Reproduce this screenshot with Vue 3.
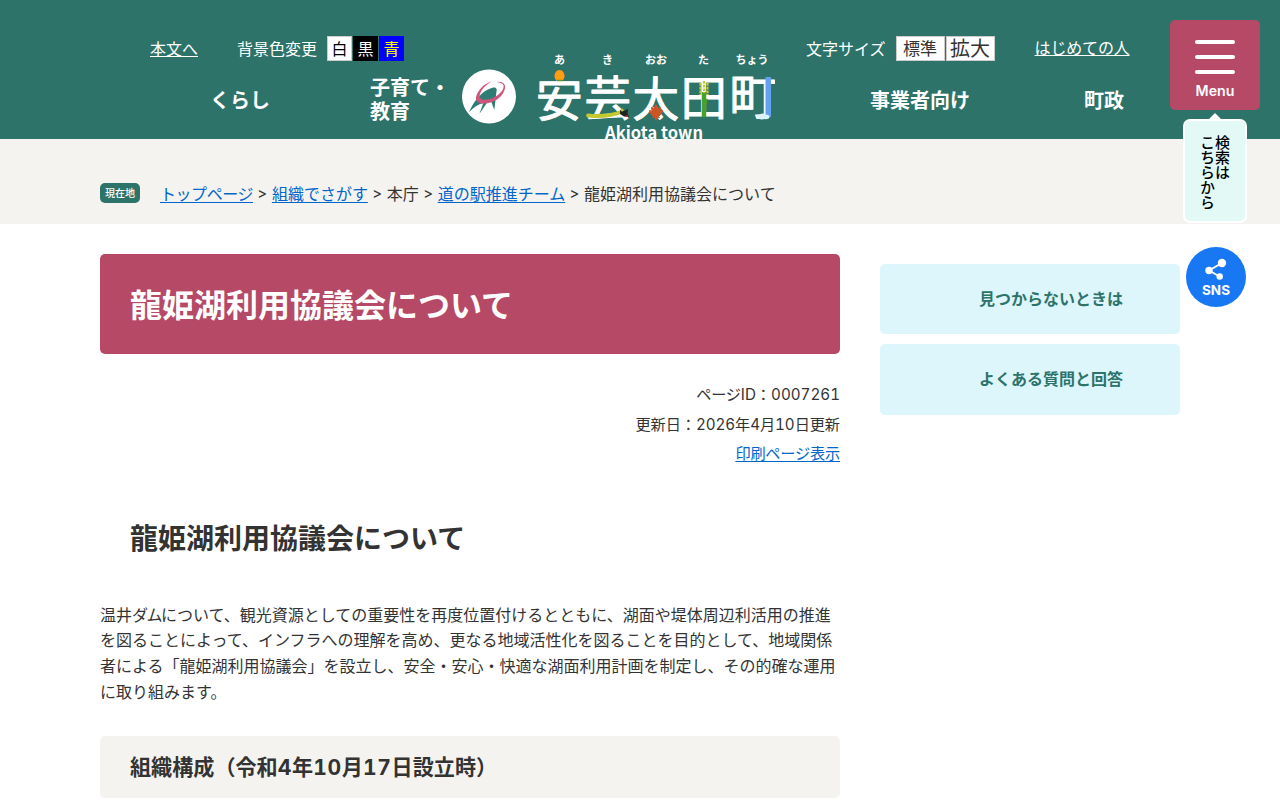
<script setup>
import { ref } from 'vue';

const bgColors = [
    { name: '白', key: 'white' },
    { name: '黒', key: 'black' },
    { name: '青', key: 'blue' },
];

const breadcrumbs = [
    { title: 'トップページ', link: true, kana: true },
    { title: '組織でさがす', link: true },
    { title: '本庁' },
    { title: '道の駅推進チーム', link: true },
    { title: '龍姫湖利用協議会について' },
];

const sideLinks = ['見つからないときは', 'よくある質問と回答'];

const ruby = [
    { text: 'あ', x: 119.5 },
    { text: 'き', x: 167.5 },
    { text: 'おお', x: 216 },
    { text: 'た', x: 263.5 },
    { text: 'ちょう', x: 312 },
];

const bgColor = ref('white');
</script>

<template>
    <div class="page">
        <header class="header">
            <div class="header__left">
                <div class="tools">
                    <a href="#main" class="tools__link">本文へ</a>
                    <span class="tools__label tools__label--bg">背景色変更</span>
                    <div class="colors">
                        <button v-for="c in bgColors" :key="c.key" @click="bgColor = c.key" class="colors__btn"
                            :class="`colors__btn--${c.key}`">{{ c.name }}</button>
                    </div>
                </div>
                <nav class="nav">
                    <a class="nav__item nav__item--life">くらし</a>
                    <a class="nav__item nav__item--child">子育て・<br>教育</a>
                </nav>
            </div>

            <svg class="logo" viewBox="22 10 313 100" width="313" height="100">
                <circle cx="49" cy="56.500" r="27" fill="#fff" />
                <g transform="translate(15 20) scale(.3333)">
                    <path d="M42 157C55 125 80 92 112 83c12-2 15 4 12 15l-6 52-10-27-10 2-25 37 12-33c-15 3-30 14-43 28z"
                        fill="#2e7c74" />
                    <path d="M98 122l2 38 8-37z" fill="#fff" />
                    <path d="M125 66C150 62 156 80 145 98C130 125 95 133 78 130C58 125 60 108 72 92C82 78 98 67 112 64C95 72 80 88 75 102C70 118 85 122 102 118C125 112 140 98 145 85C149 72 140 68 125 66z"
                        fill="#d0557a" />
                </g>

                <text v-for="r in ruby" :key="r.text" :x="r.x" y="23.500" class="logo__ruby">{{ r.text }}</text>

                <text x="96" y="75.500" class="logo__kanji">安</text>
                <text x="144.500" y="75" class="logo__kanji">芸</text>
                <text x="192.500" y="75.500" class="logo__kanji">太</text>
                <text x="240.500" y="74.500" class="logo__kanji">田</text>
                <text x="289.500" y="73.500" class="logo__kanji">町</text>

                <!-- 柿 -->
                <path d="M119.500 30c3 0 5 3 5 6s-2 5-5 5-5-2-5-5 2-6 5-6z" fill="#ff9c12" />
                <path d="M117 40.500h5" stroke="#5c9b20" stroke-width="1.500" />
                <!-- 祇園坊 -->
                <path d="M148 75.500c13 1.300 24 .5 34-4" fill="none" stroke="#c3c92f" stroke-width="3.800"
                    stroke-linecap="round" />
                <path d="M180 70l4 1 4-2-.5 4 1.500 4-5-.5-4-2.500z" fill="#222" />
                <circle cx="187" cy="76" r="1" fill="#d03030" />
                <circle cx="182" cy="70" r="1.500" fill="#b7c331" />
                <!-- 紅葉 -->
                <path d="M216 64.500l2 4 2.500-1-.5 4 2.500-1-1 3-3 3 1 1-3-.3v2.500h-1v-2.500l-3 .3 1-1-3-3-1-3 2.500 1-.5-4 2.500 1z"
                    fill="#cc5526" stroke="#cc5526" />
                <!-- 稲 -->
                <path d="M264 77V52" stroke="#48a22a" stroke-width="4.500" />
                <path d="M264 69l3-10" stroke="#48a22a" stroke-width="1.800" />
                <path d="M260.500 43v12M267.500 43v12M264 41v12" stroke="#c5cf32" stroke-width="2.200"
                    stroke-dasharray="2.800 .9" />
                <!-- 滝 -->
                <path d="M325.500 37h5.500v40h-5.500z" fill="#64a1ee" />
                <path d="M319 79c-3-1-2.500-4.500 .5-4.500 2-1.500 5-1.500 6 0 3 0 4 1 4 2.500 0 2-3 2.500-5 2-2 .8-4 .5-5.500 0z"
                    fill="#d9f3fa" />

                <text x="165" y="98.500" textLength="98" class="logo__en">Akiota town</text>
            </svg>

            <div class="header__right">
                <div class="tools">
                    <span class="tools__label">文字サイズ</span>
                    <div class="sizes">
                        <button class="sizes__btn">標準</button>
                        <button class="sizes__btn sizes__btn--big">拡大</button>
                    </div>
                    <a class="tools__link tools__link--first" href="#">はじめての人</a>
                </div>
                <nav class="nav">
                    <a class="nav__item nav__item--biz">事業者向け</a>
                    <a class="nav__item nav__item--gov">町政</a>
                </nav>
            </div>
        </header>

        <div class="floating">
            <button class="menu">
                <span class="menu__bar"></span>
                <span class="menu__bar"></span>
                <span class="menu__bar"></span>
                <span class="menu__text">Menu</span>
            </button>
            <div class="search">
                <p class="search__text">検索は<br>こちらから</p>
            </div>
            <button class="sns">
                <svg width="22" height="22" viewBox="0 0 22 22">
                    <path d="M17 5L4 12.500l10.700 6" fill="none" stroke="#fff" stroke-width="2" />
                    <circle cx="17" cy="5" r="4.200" fill="#fff" />
                    <circle cx="4" cy="12.500" r="3.700" fill="#fff" />
                    <circle cx="14.700" cy="18.500" r="3.200" fill="#fff" />
                </svg>
                <span class="sns__text">SNS</span>
            </button>
        </div>

        <div class="crumbs">
            <span class="crumbs__badge">現在地</span>
            <template v-for="(item, i) in breadcrumbs" :key="item.title">
                <span v-if="i" class="crumbs__sep">&gt;</span>
                <a v-if="item.link" href="#" class="link" :class="{ 'link--kana': item.kana }">{{ item.title }}</a>
                <span v-else>{{ item.title }}</span>
            </template>
        </div>

        <div class="content">
            <main id="main" class="main">
                <h1 class="title">龍姫湖利用協議会について</h1>
                <div class="meta">
                    <p><span class="meta__page">ページ</span>ID：0007261</p>
                    <p class="meta__date">更新日：2026年4月10日更新</p>
                    <p><a href="#" class="link meta__print">印刷ページ表示</a></p>
                </div>
                <h2 class="subtitle">龍姫湖利用協議会について</h2>
                <p class="text">
                    温井<span class="text__kana">ダム</span>について、観光資源としての重要性を再度位置付けるとともに、湖面や堤体周辺利活用の推進<br>を図ることによって、インフラへの理解を高め、更なる地域活性化を図ることを目的として、地域関係<br>者による「龍姫湖利用協議会」を設立し、安全・安心・快適な湖面利用計画を制定し、その的確な運用<br>に取り組みます。
                </p>
                <h3 class="section-title">組織構成（令和<span class="num">4</span>年<span class="num">10</span>月<span
                        class="num">17</span>日設立時）</h3>
            </main>
            <aside class="side">
                <a v-for="name in sideLinks" :key="name" class="side__link">{{ name }}</a>
            </aside>
        </div>
    </div>
</template>

<style>
body {
    margin: 0;
    overflow: hidden;
}
</style>

<style scoped>
.page {
    --green: #2d736a;
    --red: #b54966;
    --beige: #f5f3ef;
    position: relative;
    height: 800px;
    overflow: hidden;
    background: #fff;
    color: #333;
    font-family: Inter, "Noto Sans CJK JP", sans-serif;
    font-size: 16px;
    font-variant-numeric: tabular-nums;
}

p,
h1,
h2,
h3 {
    margin: 0;
}

button {
    border: 0;
    padding: 0;
    font-family: inherit;
}

.header {
    display: flex;
    height: 139px;
    padding-left: 150px;
    box-sizing: border-box;
    background: var(--green);
    color: #fff;
}

.header__left {
    width: 312px;
    padding-top: 36px;
}

.header__right {
    margin-left: 31px;
    padding-top: 36px;
}

.tools {
    display: flex;
    height: 25px;
    line-height: 27px;
    white-space: nowrap;
}

.tools__link {
    color: #fff;
    text-underline-offset: 1px;
}

.tools__link--first {
    margin-left: 40px;
    letter-spacing: -0.15px;
    line-height: 25px;
}

.tools__label--bg {
    margin-left: 39px;
}

.colors {
    display: flex;
    gap: 1px;
    margin-left: 10px;
}

.colors__btn {
    width: 25px;
    height: 25px;
    padding-top: 1px;
    font-size: 16px;
    line-height: 22px;
    background: #fff;
    color: #000;
    border: 1px solid #ccc;
}

.colors__btn--black {
    background: #000;
    color: #fff;
    border-color: #000;
}

.colors__btn--blue {
    background: #00f;
    color: #ff0;
    border-color: #00f;
}

.sizes {
    display: flex;
    gap: 1px;
    margin-left: 10px;
}

.sizes__btn {
    width: 49px;
    height: 25px;
    padding-top: 2px;
    border: 1px solid #ccc;
    background: #fff;
    color: #333;
    font-size: 17px;
    line-height: 21px;
}

.sizes__btn--big {
    font-size: 20px;
}

.nav {
    display: flex;
    align-items: center;
    height: 48px;
    margin-top: 15px;
    font-size: 20px;
    font-weight: 700;
    line-height: 24px;
    white-space: nowrap;
}

.nav__item--life {
    margin-left: 60px;
    padding-top: 2px;
}

.nav__item--child {
    margin-left: 100px;
}

.nav__item--biz {
    margin-left: 64px;
    padding-top: 2px;
}

.nav__item--gov {
    margin-left: 114px;
    padding-top: 2px;
}

.logo {
    flex: none;
    margin-top: 50px;
}

.logo__ruby {
    font-size: 11px;
    font-weight: 700;
    text-anchor: middle;
    fill: #fff;
}

.logo__kanji {
    font-size: 46.5px;
    font-weight: 400;
    fill: #fff;
    stroke: #fff;
    stroke-width: 1px;
    stroke-linejoin: round;
}

.logo__en {
    font-family: "Noto Sans CJK JP", sans-serif;
    font-size: 16.5px;
    font-weight: 700;
    fill: #fff;
}

.floating {
    position: absolute;
    top: 20px;
    left: 1170px;
    width: 90px;
    z-index: 2;
}

.menu {
    display: flex;
    flex-direction: column;
    align-items: center;
    gap: 11px;
    width: 90px;
    height: 90px;
    padding-top: 20px;
    border-radius: 5px;
    background: var(--red);
    color: #fff;
}

.menu__bar {
    width: 40px;
    height: 4px;
    border-radius: 2px;
    background: #fff;
}

.menu__text {
    margin-top: -4px;
    font-size: 14.2px;
    font-weight: 600;
    line-height: 20px;
}

.search {
    position: relative;
    box-sizing: border-box;
    width: 64px;
    height: 104px;
    margin: 9px 0 0 13px;
    border: 2px solid #fff;
    border-radius: 7px;
    background: #e2f9f6;
}

.search::before {
    content: "";
    position: absolute;
    top: -8px;
    left: 24px;
    border: 6px solid transparent;
    border-top: 0;
    border-bottom-color: #fff;
}

.search__text {
    writing-mode: vertical-rl;
    margin: 14px 0 0 14px;
    color: #000;
    font-size: 15px;
    font-weight: 500;
    line-height: 15px;
}

.sns {
    display: flex;
    flex-direction: column;
    align-items: center;
    width: 60px;
    height: 60px;
    margin: 24px 0 0 16px;
    padding-top: 11px;
    box-sizing: border-box;
    border-radius: 50%;
    background: #1877f2;
    color: #fff;
}

.sns__text {
    font-size: 13.5px;
    font-weight: 700;
    line-height: 20px;
}

.crumbs {
    display: flex;
    align-items: center;
    height: 85px;
    padding: 23px 0 0 100px;
    box-sizing: border-box;
    background: var(--beige);
    white-space: nowrap;
}

.crumbs__badge {
    width: 40px;
    margin-right: 20px;
    border-radius: 5px;
    background: var(--green);
    color: #fff;
    font-size: 10px;
    font-weight: 500;
    line-height: 20px;
    text-align: center;
}

.crumbs__sep {
    width: 18.9px;
    font-size: 15px;
    text-align: center;
}

.link {
    color: #0066cc;
    text-underline-offset: 2px;
}

.link--kana {
    letter-spacing: -0.45px;
}

.content {
    display: flex;
    gap: 40px;
    padding: 30px 100px 0;
}

.main {
    width: 740px;
}

.title {
    height: 100px;
    padding-left: 30px;
    border-radius: 5px;
    background: var(--red);
    color: #fff;
    font-size: 32px;
    line-height: 103px;
}

.meta {
    margin-top: 26px;
    font-size: 15.2px;
    line-height: 29.6px;
    text-align: right;
}

.meta__page,
.meta__print {
    letter-spacing: -0.2px;
}

.meta__date {
    letter-spacing: -0.07px;
}

.subtitle {
    margin-top: 50px;
    padding-left: 30px;
    font-size: 28px;
    line-height: 40px;
}

.text {
    margin-top: 44px;
    line-height: 25.6px;
    white-space: nowrap;
}

.text__kana {
    letter-spacing: -1.5px;
}

.section-title {
    height: 62px;
    margin-top: 31px;
    padding-left: 30px;
    border-radius: 5px;
    background: var(--beige);
    font-size: 21.1px;
    line-height: 63px;
}

.num {
    letter-spacing: 0.7px;
}

.side {
    display: flex;
    flex-direction: column;
    gap: 10px;
    width: 300px;
    padding-top: 10px;
}

.side__link {
    height: 70.4px;
    padding-left: 99px;
    border-radius: 5px;
    box-sizing: border-box;
    background: #dcf6fc;
    color: var(--green);
    font-weight: 700;
    line-height: 70px;
}
</style>
